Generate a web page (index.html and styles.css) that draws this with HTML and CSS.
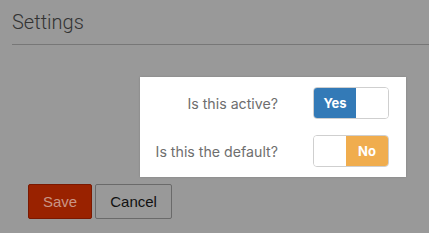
FILE: index.html
```html
<!DOCTYPE html>
<html lang="en">

<head>
    <meta charset="UTF-8">
    <meta name="viewport" content="width=device-width, initial-scale=1.0">
    <title>Settings</title>
    <link rel="stylesheet" href="styles.css">
</head>

<body>
    <div class="settings-page">
        <h1 class="page-title">Settings</h1>

        <div class="form-area">
            <div class="options-panel">
                <div class="option-row">
                    <span class="option-label">Is this active?</span>
                    <div class="toggle on">
                        <span class="toggle-fill">Yes</span>
                        <span class="toggle-empty"></span>
                    </div>
                </div>
                <div class="option-row">
                    <span class="option-label">Is this the default?</span>
                    <div class="toggle off">
                        <span class="toggle-empty"></span>
                        <span class="toggle-fill">No</span>
                    </div>
                </div>
            </div>
        </div>

        <div class="actions">
            <button class="btn btn-save">Save</button>
            <button class="btn btn-cancel">Cancel</button>
        </div>
    </div>
</body>

</html>
```

FILE: styles.css
```css
:root {
    --backdrop: #999999;
    --title-color: #333;
    --rule-color: #777;
    --label-color: #6e6e6e;
    --toggle-border: #cfcfcf;
    --yes-color: #337ab7;
    --no-color: #f0ad4e;
}

html, body {
    margin: 0;
    padding: 0;
}

body {
    background-color: var(--backdrop);
    font-family: Inter, 'Noto Sans', sans-serif;
    width: 429px;
    height: 233px;
    overflow: hidden;
}

.settings-page {
    padding: 10px 0 0 12px;
}

.page-title {
    margin: 0;
    padding-bottom: 10px;
    font-family: Roboto, sans-serif;
    font-weight: 300;
    font-size: 20px;
    line-height: 24px;
    color: var(--title-color);
    border-bottom: 1px solid var(--rule-color);
}

.form-area {
    display: flex;
    justify-content: flex-end;
    padding: 32px 23px 0 0;
}

.options-panel {
    background-color: #fff;
    width: 266px;
    height: 100px;
    box-sizing: border-box;
    padding: 10px 17px 10px 0;
    display: flex;
    flex-direction: column;
    gap: 16px;
    box-shadow: 0 0 2px rgba(0, 0, 0, 0.15);
}

.option-row {
    display: flex;
    justify-content: flex-end;
    align-items: center;
    gap: 35px;
}

.option-label {
    font-size: 14.2px;
    color: var(--label-color);
}

.toggle {
    display: flex;
    width: 76px;
    height: 32px;
    box-sizing: border-box;
    border: 1px solid var(--toggle-border);
    border-radius: 4px;
    overflow: hidden;
}

.toggle-fill {
    width: 42px;
    display: flex;
    justify-content: center;
    align-items: center;
    color: #fff;
    font-weight: bold;
    font-size: 13px;
}

.toggle-empty {
    flex: 1;
    background-color: #fff;
}

.toggle.on .toggle-fill {
    background-color: var(--yes-color);
}

.toggle.off .toggle-fill {
    background-color: var(--no-color);
}

.actions {
    display: flex;
    gap: 3px;
    padding: 7px 0 0 16px;
}

.btn {
    height: 35px;
    padding: 0 14px;
    font-family: 'Liberation Sans', Arial, sans-serif;
    font-size: 15px;
    border-radius: 2px;
    cursor: pointer;
}

.btn-save {
    background-color: #992200;
    border: 1px solid #7a1800;
    color: #c99686;
}

.btn-cancel {
    background-color: var(--backdrop);
    border: 1px solid #6a6a6a;
    color: #111;
}
```
